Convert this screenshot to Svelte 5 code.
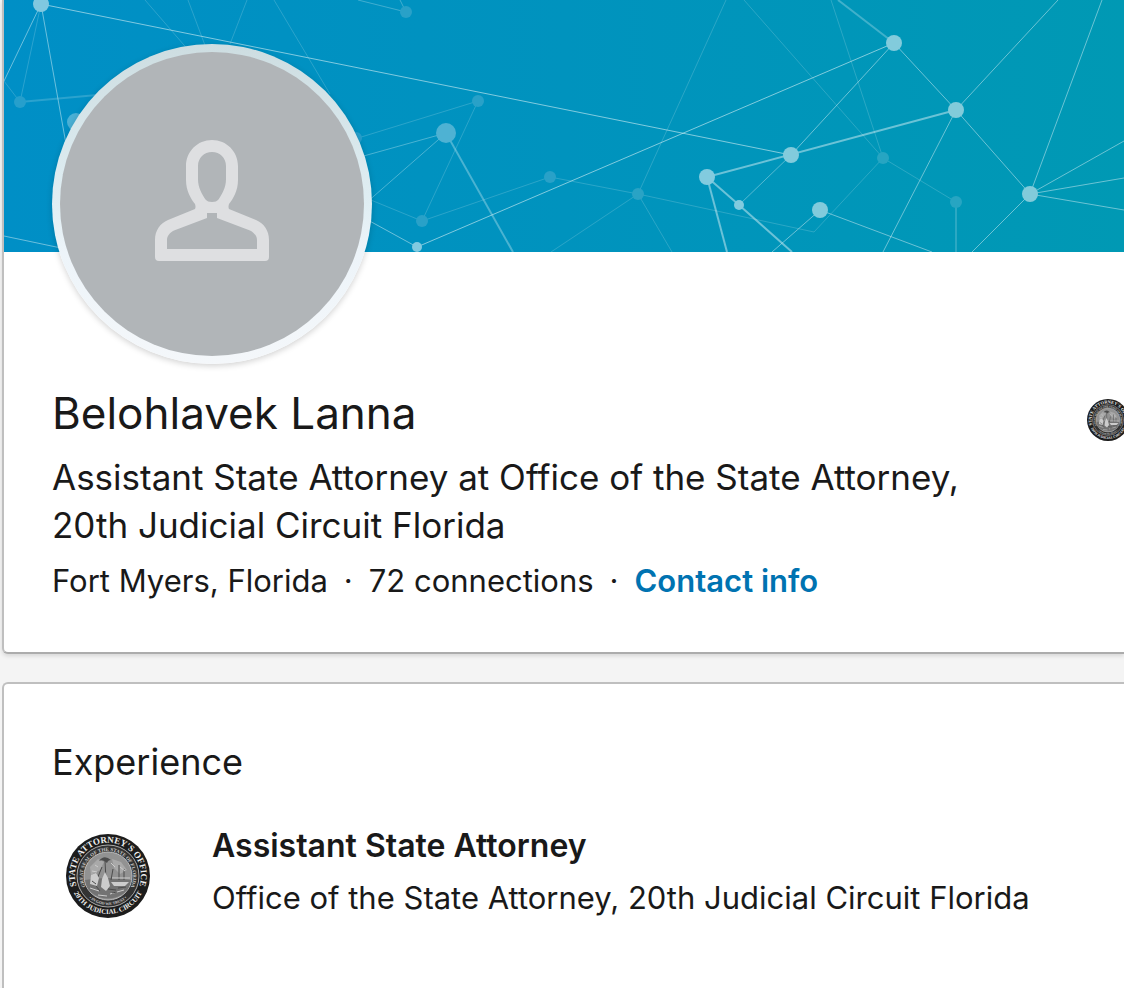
<script>
  const profile = {
    name: 'Belohlavek Lanna',
    headline:
      'Assistant State Attorney at Office of the State Attorney, 20th Judicial Circuit Florida',
    location: 'Fort Myers, Florida',
    connections: '72 connections',
  };

  const positions = [
    {
      title: 'Assistant State Attorney',
      company: 'Office of the State Attorney, 20th Judicial Circuit Florida',
    },
  ];

  // [x1, y1, x2, y2, width, opacity]
  const lines = [
    [41, 4, 4, 81, 1, 0.5],
    [41, 4, 20, 102, 1, 0.2],
    [41, 4, 76, 200, 1, 0.5],
    [4, 81, 20, 102, 1, 0.2],
    [20, 102, 130, 92, 2, 0.2],
    [41, 4, 791, 155, 1, 0.6],
    [145, 0, 190, 52, 1, 0.2],
    [188, 0, 206, 48, 1, 0.2],
    [247, 0, 230, 44, 1, 0.2],
    [274, 0, 330, 94, 1, 0.2],
    [4, 236, 80, 252, 1, 0.5],
    [358, 0, 406, 12, 1, 0.3],
    [400, 0, 406, 12, 1, 0.3],
    [478, 101, 358, 138, 1, 0.2],
    [478, 101, 422, 221, 1, 0.2],
    [446, 133, 360, 157, 1, 0.35],
    [446, 133, 366, 203, 1, 0.35],
    [446, 133, 513, 252, 2, 0.35],
    [366, 198, 422, 221, 1, 0.2],
    [422, 221, 550, 177, 1, 0.2],
    [550, 177, 638, 194, 1, 0.2],
    [638, 194, 814, 232, 1, 0.2],
    [814, 232, 883, 158, 1, 0.2],
    [638, 194, 726, 0, 1, 0.2],
    [638, 194, 551, 252, 1, 0.2],
    [638, 194, 672, 252, 1, 0.2],
    [366, 219, 417, 247, 1, 0.5],
    [417, 247, 894, 43, 1, 0.6],
    [744, 0, 883, 158, 1, 0.2],
    [831, 0, 883, 158, 1, 0.2],
    [838, 0, 894, 43, 2, 0.3],
    [883, 158, 956, 202, 1, 0.2],
    [956, 202, 956, 252, 2, 0.2],
    [894, 43, 791, 155, 1, 0.5],
    [791, 155, 739, 205, 1, 0.4],
    [894, 43, 956, 110, 1, 0.5],
    [956, 110, 1058, 0, 1, 0.5],
    [956, 110, 1030, 194, 1, 0.5],
    [956, 110, 883, 252, 1, 0.5],
    [956, 110, 707, 177, 2, 0.5],
    [707, 177, 739, 205, 2, 0.5],
    [739, 205, 792, 252, 2, 0.5],
    [707, 177, 727, 252, 2, 0.5],
    [820, 210, 772, 252, 1, 0.5],
    [820, 210, 932, 252, 1, 0.5],
    [1030, 194, 1102, 0, 1, 0.5],
    [1030, 194, 1124, 141, 1, 0.5],
    [1030, 194, 1124, 178, 1, 0.5],
    [1030, 194, 1124, 210, 1, 0.5],
    [1030, 194, 972, 252, 1, 0.5],
  ];

  // [x, y, radius, fill]
  const dots = [
    [41, 4, 8, '#80c8e0'],
    [20, 102, 6, '#269fcc'],
    [76, 122, 9, '#4bb0d5'],
    [356, 138, 6, '#269fcc'],
    [406, 12, 6, '#29a1c8'],
    [478, 101, 6, '#29a1c8'],
    [446, 133, 10, '#4eb2d3'],
    [422, 221, 6, '#29a1c8'],
    [417, 247, 5, '#80cae0'],
    [550, 177, 6, '#29a1c8'],
    [638, 194, 6, '#29a3c5'],
    [707, 177, 8, '#82cbdf'],
    [739, 205, 5, '#82cbdf'],
    [791, 155, 8, '#82cbdc'],
    [820, 210, 8, '#82cbdc'],
    [894, 43, 8, '#82cbdc'],
    [883, 158, 6, '#27a5c2'],
    [956, 110, 8, '#82cbda'],
    [956, 202, 6, '#27a5c2'],
    [1030, 194, 8, '#82cbda'],
  ];
</script>

{#snippet seal(id)}
  <svg class="seal" viewBox="0 0 84 84" role="img" aria-label="State Attorney's Office seal">
    <defs>
      <path id="{id}-upper" d="M11 53A33 33 0 1 1 73 53" />
      <path id="{id}-lower" d="M4 42A38 38 0 0 0 80 42" />
      <path id="{id}-inner" d="M27 62A25 25 0 1 1 57 62" />
      <path id="{id}-motto" d="M13 42A29 29 0 0 0 71 42" />
    </defs>
    <circle cx="42" cy="42" r="42" fill="#1c1c1c" />
    <circle cx="42" cy="42" r="31" fill="#333" stroke="#aaa" stroke-width="1" />
    <circle cx="42" cy="42" r="24" fill="#929292" stroke="#bbb" stroke-width="1" />
    <path d="M19 46q23-4 46 0q-1 9-8 14q-15 9-30 0q-7-5-8-14z" fill="#737373" />
    <path d="M24 33l8-8 6 3-4 8-9 5zM46 25l9 3 6 8-7 4-6-6z" fill="#a9a9a9" />
    <path d="M33 27q5-7 12-1q-3 0-4 3q-4-4-8-2z" fill="#4c4c4c" />
    <path d="M39 27l1 19M36 33l-5 12M53 31v15M58 35v11M47 35l-2 11" stroke="#4c4c4c" stroke-width="1" fill="none" />
    <path d="M25 41l5-2 3 5-2 8-7-2zM36 45l3-7 3 6 2 8-4 5-5-4zM45 48h18l-4 4H48z" fill="#ccc" />
    <path d="M46 44h18M24 54l9 3M44 60l14-4M32 61l9 1" stroke="#ccc" stroke-width="1" fill="none" />
    <path d="M30 52l4 5M42 55l8 1M52 54l8-1M26 47l4 3M46 59l5-1" stroke="#4c4c4c" stroke-width="1" fill="none" />
    <path d="M26 37l5 1M29 31l3 2M45 29l4 4M54 33l5 4" stroke="#ccc" stroke-width="1" fill="none" />
    <g class="seal-text">
      <text font-size="9"><textPath href="#{id}-upper" startOffset="50%" text-anchor="middle">STATE ATTORNEY'S OFFICE</textPath></text>
      <text font-size="7"><textPath href="#{id}-lower" startOffset="50%" text-anchor="middle">20TH JUDICIAL CIRCUIT</textPath></text>
      <text font-size="5" opacity="0.8"><textPath href="#{id}-inner" startOffset="50%" text-anchor="middle">GREAT SEAL OF THE STATE OF FLORIDA</textPath></text>
      <text font-size="4" opacity="0.8"><textPath href="#{id}-motto" startOffset="50%" text-anchor="middle">• IN GOD WE TRUST •</textPath></text>
    </g>
  </svg>
{/snippet}

<main>
  <section class="card profile">
    <svg class="banner" viewBox="4 0 1120 252" preserveAspectRatio="xMinYMin slice" aria-hidden="true">
      <defs>
        <linearGradient id="sky">
          <stop offset="0" stop-color="#008fc6" />
          <stop offset="0.5" stop-color="#0093be" />
          <stop offset="1" stop-color="#0099b4" />
        </linearGradient>
      </defs>
      <rect x="4" width="1120" height="252" fill="url(#sky)" />
      {#each lines as [x1, y1, x2, y2, width, opacity]}
        <line {x1} {y1} {x2} {y2} stroke="#d5f0f5" stroke-width={width} stroke-opacity={opacity} />
      {/each}
      {#each dots as [cx, cy, r, fill]}
        <circle {cx} {cy} {r} {fill} />
      {/each}
    </svg>

    <div class="avatar">
      <svg viewBox="60 52 304 304" role="img" aria-label={profile.name}>
        <path
          fill="#dedfe1"
          fill-rule="evenodd"
          d="M212 140C226.500 140 238 151.500 238 166V180C238 191 233 199 229 204Q228 207 229 209L256 220C264 223.500 269 230.500 269 240V257Q269 261 265 261H159Q155 261 155 257V240C155 230.500 160 223.500 168 220L195 209Q196 207 195 204C191 199 186 191 186 180V166C186 151.500 197.500 140 212 140ZM212 152C204 152 198 158 198 166V179C198 188 202 194 205.500 199.500Q207.500 202 212 202Q216.500 202 218.500 199.500C222 194 226 188 226 179V166C226 158 220 152 212 152ZM207 213H217V218L250 230.500C254 232.500 257 236 257 240V249H167V240C167 236 170 232.500 174 230.500L207 218Z"
        />
      </svg>
    </div>

    <div class="intro">
      <div class="about">
        <h1>{profile.name}</h1>
        <p class="headline">{profile.headline}</p>
        <p class="meta">
          <span>{profile.location}</span>
          <span>·</span>
          <span>{profile.connections}</span>
          <span>·</span>
          <a href="#contact">Contact info</a>
        </p>
      </div>
      <a class="employer" href="#experience" aria-label="Current employer">
        {@render seal('small')}
      </a>
    </div>
  </section>

  <section class="card experience" id="experience">
    <h2>Experience</h2>
    {#each positions as position, i}
      <article>
        <div class="logo">{@render seal(`job-${i}`)}</div>
        <div>
          <h3>{position.title}</h3>
          <p>{position.company}</p>
        </div>
      </article>
    {/each}
  </section>
</main>

<style>
  :global(body) {
    background: #f4f4f4;
  }

  main {
    display: flex;
    flex-direction: column;
    gap: 28px;
    padding-left: 2px;
    overflow: hidden;
    font-family: Inter, 'Liberation Sans', sans-serif;
    color: #191919;
  }

  h1,
  h2,
  h3,
  p {
    margin: 0;
    font-weight: 400;
  }

  .card {
    background: #fff;
    border: 2px solid #bfbfbf;
    border-right: none;
  }

  .profile {
    border-top: none;
    border-bottom-color: #acacac;
    border-bottom-left-radius: 6px;
    box-shadow: 0 2px 4px rgba(0, 0, 0, 0.12);
    padding-bottom: 49px;
  }

  .banner {
    display: block;
    width: 100%;
    height: 252px;
  }

  .avatar {
    position: relative;
    box-sizing: border-box;
    width: 320px;
    height: 320px;
    margin: -208px 0 0 48px;
    padding: 8px;
    border-radius: 50%;
    background: linear-gradient(#cddde1, #e0eef3 50%, #edf4f9 65%, #f4f7fa);
    box-shadow: 0 2px 6px rgba(0, 0, 0, 0.18);
  }

  .avatar svg {
    display: block;
    border-radius: 50%;
    background: #b1b5b8;
  }

  .intro {
    display: flex;
    gap: 96px;
    padding: 19px 0 0 48px;
  }

  .about {
    flex: 1;
  }

  h1 {
    font-size: 44px;
    line-height: 60px;
  }

  .headline {
    margin-top: 10px;
    font-size: 35px;
    line-height: 48px;
  }

  .meta {
    display: flex;
    gap: 16px;
    margin-top: 10px;
    font-size: 31px;
    line-height: 44px;
  }

  .meta a {
    color: #0073b1;
    font-weight: 600;
    text-decoration: none;
  }

  .employer {
    width: 42px;
    height: 42px;
    margin: 16px -5px 0 0;
  }

  .seal {
    display: block;
    width: 100%;
  }

  .seal-text {
    font-family: 'Liberation Serif', serif;
    font-weight: 700;
    fill: #eee;
  }

  .experience {
    min-height: 280px;
    padding: 48px 48px 0;
    border-top-left-radius: 6px;
  }

  h2 {
    font-size: 36px;
    line-height: 60px;
  }

  article {
    display: flex;
    gap: 62px;
    margin-top: 24px;
  }

  .logo {
    flex: none;
    width: 84px;
    padding: 18px 0 0 14px;
  }

  h3 {
    font-size: 32px;
    font-weight: 600;
    line-height: 60px;
  }

  article p {
    font-size: 31px;
    line-height: 44px;
  }
</style>
